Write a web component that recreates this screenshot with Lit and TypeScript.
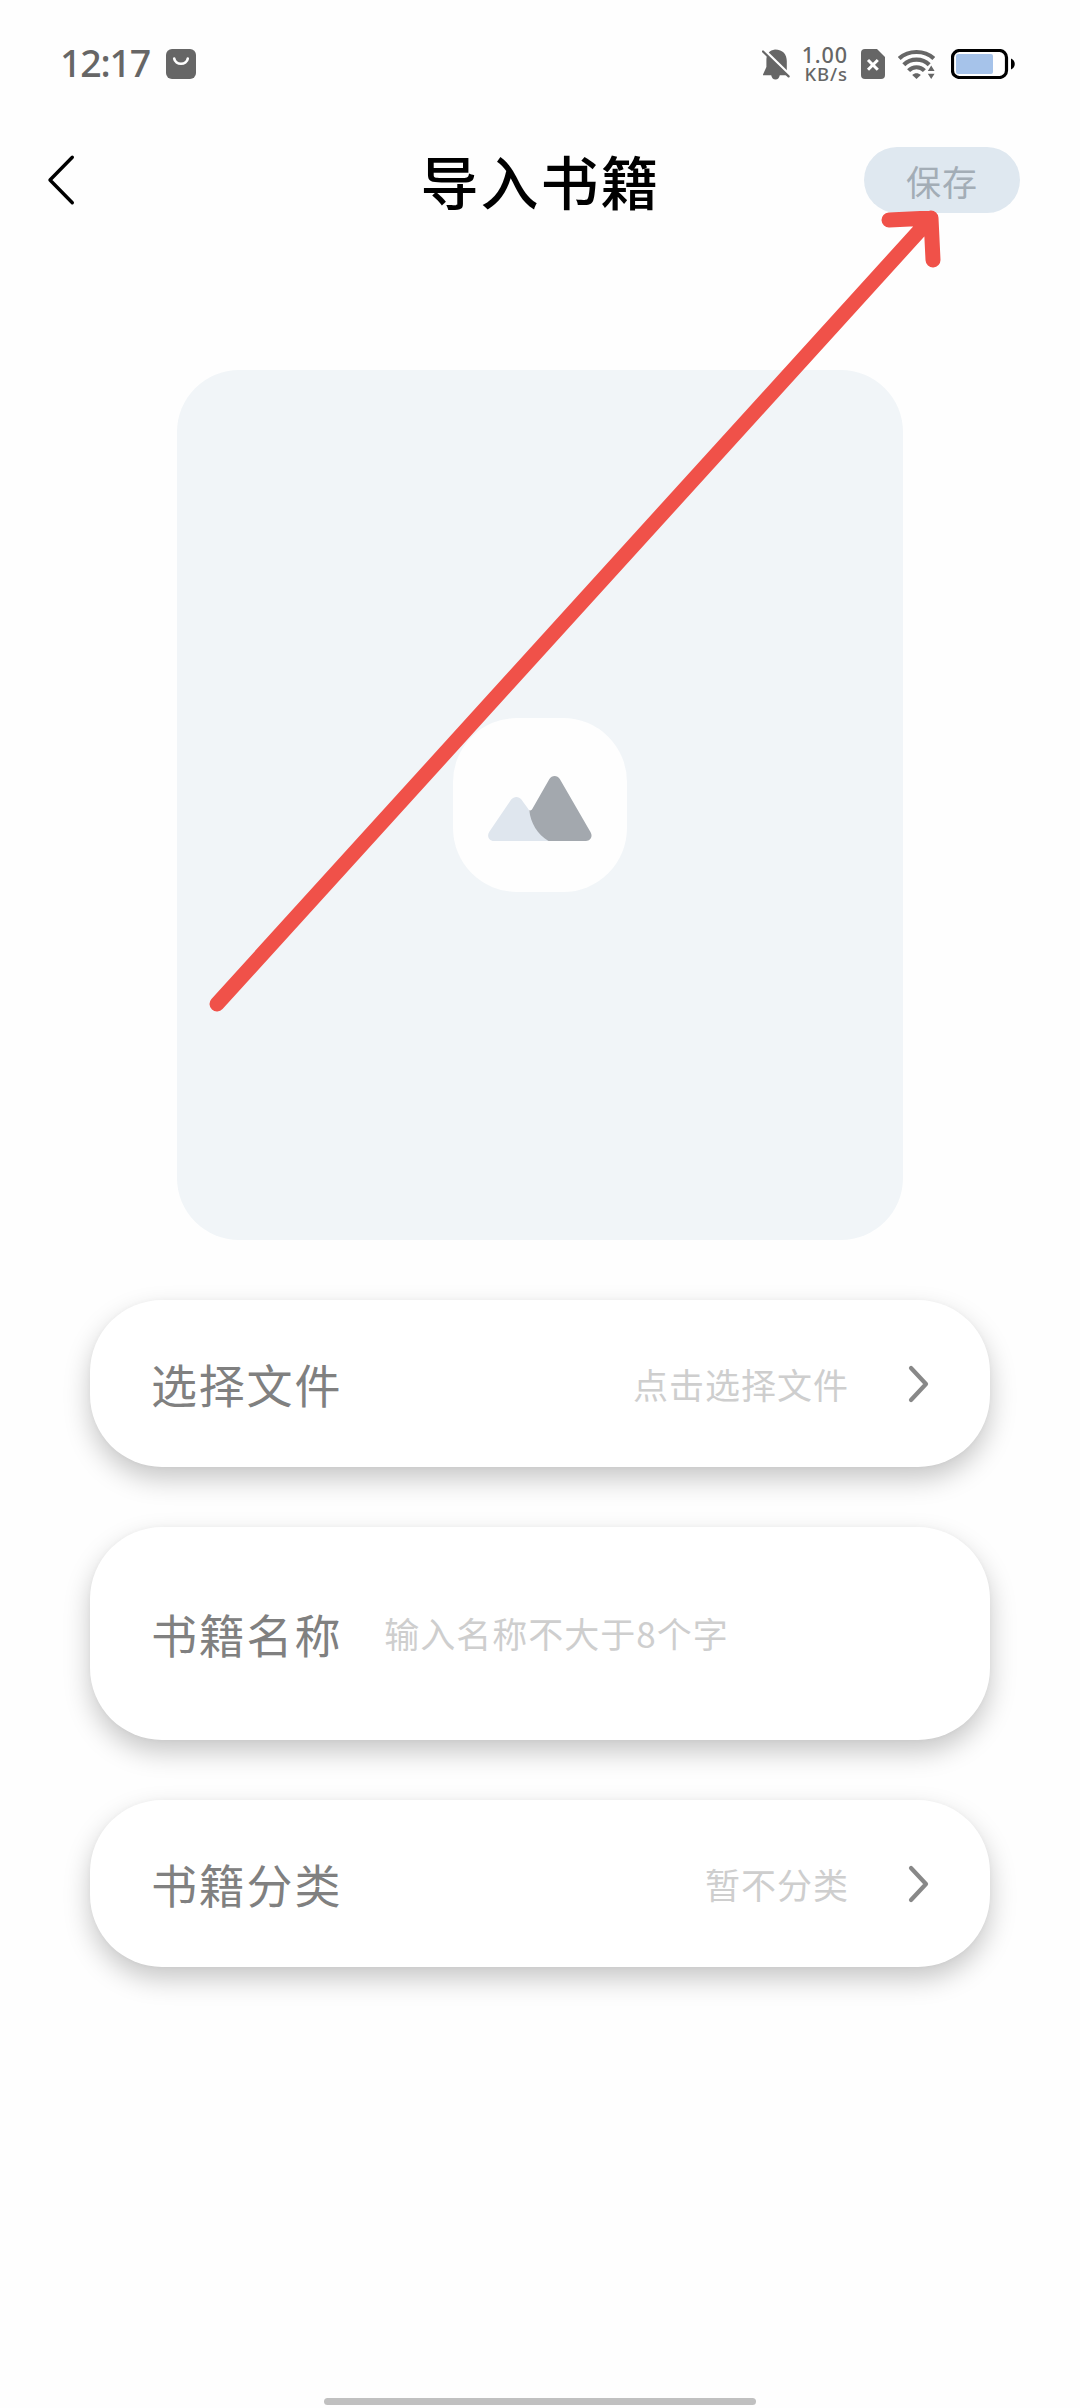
import { LitElement, html, css, nothing } from "lit";
import { customElement, property } from "lit/decorators.js";

@customElement("status-bar")
class StatusBar extends LitElement {
  static styles = css`
    :host {
      display: flex;
      justify-content: space-between;
      box-sizing: border-box;
      height: 128px;
      padding: 0 64px 0 60px;
      align-items: center;
      color: #666;
      font-family: "Noto Sans", "Open Sans", sans-serif;
      font-weight: 500;
    }
    svg {
      display: block;
    }
    .group {
      display: flex;
      align-items: center;
    }
    .time {
      font-size: 37.5px;
      line-height: 40px;
      letter-spacing: -1.2px;
      width: 106px;
      padding-bottom: 2px;
    }
    .speed {
      width: 58px;
      text-align: right;
      margin-right: 13px;
    }
    .rate {
      font-size: 21.5px;
      line-height: 19px;
      letter-spacing: 0.9px;
    }
    .unit {
      font-size: 18.5px;
      line-height: 19px;
      letter-spacing: 0.9px;
    }
    .wifi {
      margin: 0 16px 0 13px;
    }
  `;

  render() {
    return html`
      <div class="group">
        <div class="time">12:17</div>
        <svg width="30" height="30" viewBox="0 0 30 30">
          <rect width="30" height="30" rx="6" fill="#666" />
          <path d="M8.2 9.5C9.2 16.5 20.8 16.5 21.8 9.5" fill="none" stroke="#fff" stroke-width="2.6" stroke-linecap="round" />
        </svg>
      </div>
      <div class="group">
        <svg width="28" height="31" viewBox="0 0 28 31">
          <path d="M13 0.5C7.5 1.2 4.4 5.2 4.4 11V18L1 25.5V26.2H9.2C9.8 29 11.2 30.4 13.5 30.4S17.2 29 17.8 26.2H25.5L24.8 24.4V12C24.8 5.5 21 0.6 13 0.5Z" fill="#666" />
          <path d="M2.4 1.4L28 26.3" stroke="#fff" stroke-width="3" />
          <path d="M1 2.5L26.6 27.4" stroke="#666" stroke-width="2.2" stroke-linecap="round" />
        </svg>
        <div class="speed">
          <div class="rate">1.00</div>
          <div class="unit">KB/s</div>
        </div>
        <svg width="24" height="30" viewBox="0 0 24 30">
          <path d="M4 0H16L24 8V26A4 4 0 0 1 20 30H4A4 4 0 0 1 0 26V4A4 4 0 0 1 4 0Z" fill="#666" />
          <path d="M7 11L16.8 20.8M16.8 11L7 20.8" stroke="#fff" stroke-width="3" />
        </svg>
        <svg class="wifi" width="37" height="30" viewBox="0 0 37 30">
          <g fill="none" stroke="#666" stroke-width="4.2">
            <path d="M1.2 9.5C10.5 0.8 26.5 0.8 35.8 9.5" />
            <path d="M5.8 15.8C12.6 9 24.4 9 31.2 15.8" />
            <path d="M10.6 21.6C15 17.1 22 17.1 26.4 21.6" />
          </g>
          <path d="M14.2 26C16.8 23.8 20.2 23.8 22.8 26L18.5 30Z" fill="#666" />
          <path d="M29.8 22L33.2 16.5L36.6 22ZM29.8 24.8L33.2 30L36.6 24.8Z" fill="#666" stroke="#fff" stroke-width="2.4" paint-order="stroke" />
        </svg>
        <svg width="65" height="30" viewBox="0 0 65 30">
          <rect x="1.5" y="1.5" width="54" height="27" rx="7" fill="#fff" stroke="#000" stroke-width="3.2" />
          <rect x="5" y="5" width="37" height="20" rx="2" fill="#a6c3ea" />
          <path d="M60 9.5C65 11.5 65 18.5 60 20.5Z" fill="#000" />
        </svg>
      </div>
    `;
  }
}

@customElement("form-row")
class FormRow extends LitElement {
  @property() label = "";
  @property() hint = "";
  @property({ type: Boolean, reflect: true }) input = false;

  static styles = css`
    :host {
      display: flex;
      align-items: center;
      box-sizing: border-box;
      width: 900px;
      height: 167px;
      padding: 0 60px 0 61px;
      border-radius: 72px;
      background: #fff;
      box-shadow: 0 12px 27px rgba(0, 0, 0, 0.22), 0 0 5px rgba(0, 0, 0, 0.03);
    }
    :host([input]) {
      height: 213px;
    }
    .label {
      font-size: 46px;
      line-height: 64px;
      letter-spacing: 1.8px;
      color: #808080;
      padding-bottom: 2px;
    }
    .hint {
      font-size: 35px;
      line-height: 50px;
      letter-spacing: 1px;
      color: #cecece;
      margin-left: auto;
      padding-top: 1px;
    }
    :host([input]) .hint {
      margin-left: 42px;
      padding: 0 0 2px;
    }
    .chevron {
      display: block;
      margin-left: 59px;
    }
  `;

  render() {
    return html`
      <div class="label">${this.label}</div>
      <div class="hint">${this.hint}</div>
      ${this.input
        ? nothing
        : html`<svg class="chevron" width="22" height="38" viewBox="0 0 22 38">
            <path d="M3 3L18 19L3 35" fill="none" stroke="#888" stroke-width="4.2" stroke-linecap="round" stroke-linejoin="round" />
          </svg>`}
    `;
  }
}

@customElement("app-root")
class AppRoot extends LitElement {
  static styles = css`
    :host {
      display: flex;
      flex-direction: column;
      align-items: stretch;
      position: relative;
      box-sizing: border-box;
      width: 1080px;
      height: 2408px;
      overflow: hidden;
      background: #fefefe;
      font-family: "Noto Sans CJK SC", sans-serif;
    }
    svg {
      display: block;
    }
    .header {
      display: grid;
      grid-template-columns: 1fr auto 1fr;
      align-items: center;
      height: 104px;
      padding: 0 60px 0 46px;
    }
    .title {
      font-size: 58px;
      line-height: 80px;
      font-weight: 500;
      letter-spacing: 2px;
      color: #000;
      margin-left: 15px;
    }
    .save {
      justify-self: end;
      width: 156px;
      height: 66px;
      border-radius: 33px;
      background: #dfe8f0;
      color: #a3adb6;
      font-size: 35px;
      line-height: 67px;
      letter-spacing: 1px;
      text-align: center;
    }
    .cover {
      display: flex;
      align-items: center;
      justify-content: center;
      align-self: center;
      width: 726px;
      height: 870px;
      margin-top: 138px;
      border-radius: 62px;
      background: #f1f5f8;
    }
    .thumb {
      display: flex;
      align-items: center;
      justify-content: center;
      box-sizing: border-box;
      width: 174px;
      height: 174px;
      padding-top: 7px;
      border-radius: 64px;
      background: #fefefe;
    }
    .form {
      display: flex;
      flex-direction: column;
      align-items: center;
      gap: 60px;
      margin-top: 60px;
    }
    .home {
      align-self: center;
      width: 432px;
      height: 7px;
      margin-top: auto;
      margin-bottom: 3px;
      border-radius: 4px;
      background: #c0c0c0;
    }
    .arrow {
      position: absolute;
      left: 0;
      top: 0;
      pointer-events: none;
    }
  `;

  render() {
    return html`
      <status-bar></status-bar>
      <div class="header">
        <svg width="30" height="54" viewBox="0 0 30 54">
          <path d="M26.3 4.2L4 27L26.3 49.8" fill="none" stroke="#000" stroke-width="3.4" stroke-linecap="round" stroke-linejoin="round" />
        </svg>
        <div class="title">导入书籍</div>
        <div class="save">保存</div>
      </div>
      <div class="cover">
        <div class="thumb">
          <svg width="104" height="65" viewBox="0 0 104 65">
            <path d="M23.2 23.5C26 20 30.8 20 33.4 23.5L41 34L46 46L61 65H6C0.5 65 -1.5 59.5 1.5 55.5Z" fill="#dfe6ee" />
            <path d="M41.3 34.3C42.8 34.6 43.6 34.2 44.4 32.8L61.4 3C63.8 -1 69.4 -1 71.8 3L102.6 56.2C105 60.3 102.6 65 98 65H60.5C49.5 58.5 42.5 47 41.3 34.3Z" fill="#a3a8ae" />
          </svg>
        </div>
      </div>
      <div class="form">
        <form-row label="选择文件" hint="点击选择文件"></form-row>
        <form-row label="书籍名称" hint="输入名称不大于8个字" input></form-row>
        <form-row label="书籍分类" hint="暂不分类"></form-row>
      </div>
      <div class="home"></div>
      <svg class="arrow" width="1080" height="1100" viewBox="0 0 1080 1100">
        <path d="M217 1004L931 218M889 220L931 218L933 260" fill="none" stroke="#f05149" stroke-width="15" stroke-linecap="round" stroke-linejoin="round" />
      </svg>
    `;
  }
}
